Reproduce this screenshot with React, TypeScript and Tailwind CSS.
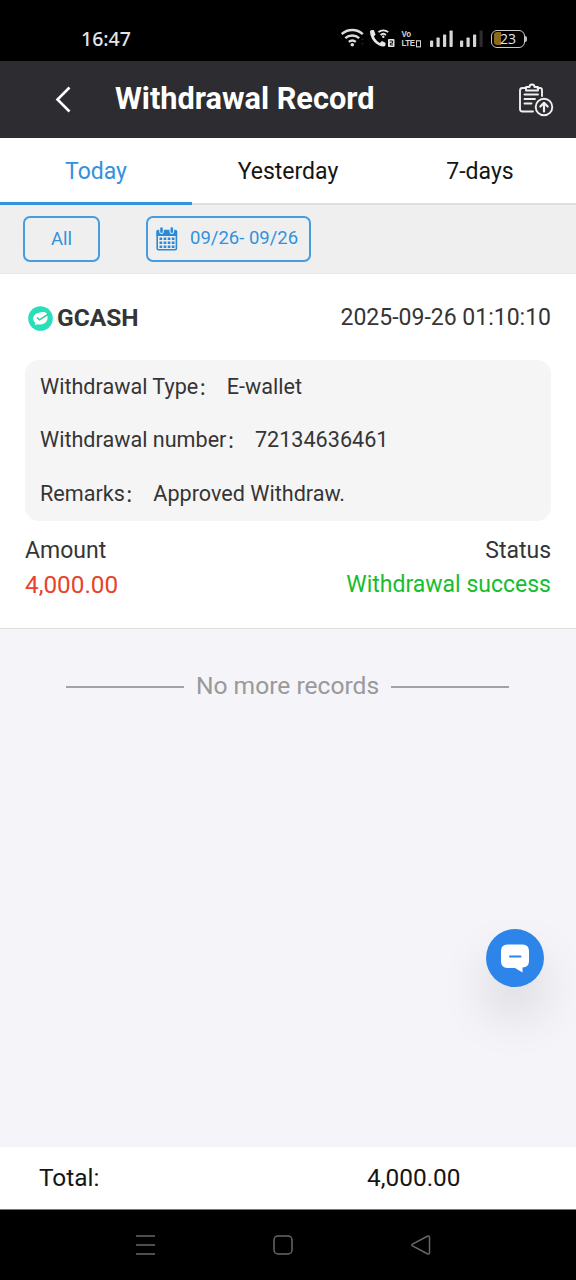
import type { ReactNode } from "react";

const tabs = ["Today", "Yesterday", "7-days"];

const details = [
    { label: "Withdrawal Type", value: "E-wallet" },
    { label: "Withdrawal number", value: "72134636461" },
    { label: "Remarks", value: "Approved Withdraw." },
];

function SignalBars({ weak = false }: { weak?: boolean }) {
    return (
        <svg width="24" height="18" viewBox="0 0 24 18" fill="#d6d6d6">
            <rect x="0" y="10.5" width="3.2" height="6.5" rx="0.8" />
            <rect x="6.5" y="7.5" width="3.2" height="9.5" rx="0.8" />
            <rect x="13" y="4.5" width="3.2" height="12.5" rx="0.8" />
            <rect x="19.5" y="0.5" width="3.2" height="16.5" rx="0.8" fill={weak ? "#2c2c2c" : "#d6d6d6"} />
        </svg>
    );
}

function StatusBar() {
    return (
        <div className="flex h-[61px] items-center bg-black pt-4 pr-[49px] pl-[81px] text-[#e4e4e4]">
            <span className="font-['Noto_Sans',sans-serif] text-[19.5px] leading-none font-medium">16:47</span>
            <div className="ml-auto flex items-center">
                {/* Wifi */}
                <svg className="-mt-0.5" width="24" height="20" viewBox="0 0 24 20" fill="none" stroke="#dcdcdc" strokeWidth="2.4">
                    <path d="M.7 6.1a15.5 15.5 0 0 1 21.1 0" />
                    <path d="M4.3 10.1a10.5 10.5 0 0 1 13.9 0" />
                    <path d="M7.8 13.9a5.5 5.5 0 0 1 7 0" />
                    <circle cx="11.3" cy="16.8" r="1.8" fill="#dcdcdc" stroke="none" />
                    <path d="m20 12 1.5-2 1.5 2zM20 15l1.5 2 1.5-2z" fill="#222" stroke="none" />
                </svg>
                {/* Wifi calling */}
                <svg className="-mt-px ml-[5px]" width="26" height="20" viewBox="0 0 26 20" fill="none">
                    <path
                        d="M0 3.3C0 2.3 1.6 2 3.8 2L5.6 6.6 3.9 8.4c1.5 3 3.2 4.9 6 6.5l2-1.8 3.5 1.7c.6 1.8 0 3.7-1.6 3.7C7 18.5 0 11.5 0 3.3Z"
                        fill="#e6e6e6"
                    />
                    <path d="M8.4 4.2a7.3 7.3 0 0 1 9.8 0M10.6 7a4 4 0 0 1 5.4 0" stroke="#e6e6e6" strokeWidth="1.8" />
                    <circle cx="13.3" cy="8.8" r="1.2" fill="#e6e6e6" />
                    <rect x="18" y="11" width="6.5" height="8" rx="1" fill="#e6e6e6" />
                    <path d="M19.7 13h2.9v2.2h-2.2v1.8h2.6" stroke="#111" strokeWidth="1" />
                </svg>
                <div className="ml-1.5 flex w-[22px] scale-y-120 flex-col font-['Liberation_Sans',sans-serif] text-[8px] leading-[8px] font-bold text-[#d6d6d6]">
                    <span>Vo</span>
                    <span className="flex items-center tracking-[-0.5px]">
                        LTE
                        <i className="ml-[1.5px] h-[6px] w-[5px] shrink-0 border border-[#cfcfcf]" />
                    </span>
                </div>
                <div className="ml-1.5 flex gap-[6.5px]">
                    <SignalBars />
                    <SignalBars weak />
                </div>
                {/* Battery */}
                <div className="ml-[7px] flex items-center">
                    <div className="flex h-[18px] w-[34px] rounded-[6px] border-[1.5px] border-[#c9c9c9] p-[1.5px]">
                        <div className="flex w-full items-center justify-center rounded-[3px] bg-linear-to-r from-[#8d6816] from-25% to-transparent to-25% font-['Open_Sans',sans-serif] text-[14px] leading-none">
                            23
                        </div>
                    </div>
                    <i className="h-[6px] w-[2px] rounded-r bg-[#bdbdbd]" />
                </div>
            </div>
        </div>
    );
}

function Header() {
    return (
        <header className="flex h-[77px] items-center bg-[#2d2c31] pr-[22px] pl-[54px] text-white">
            <svg className="-mt-[2px]" width="18" height="28" viewBox="0 0 18 28" fill="none" stroke="#fff" strokeWidth="2.6">
                <path d="M15.5 2.5 3.5 14.5l12 12" />
            </svg>
            <h1 className="ml-[43px] text-[30.7px] leading-none font-bold">Withdrawal Record</h1>
            <svg
                className="ml-auto"
                width="36"
                height="36"
                viewBox="0 0 36 36"
                fill="none"
                stroke="#efefef"
                strokeWidth="1.9"
                strokeLinecap="round"
                strokeLinejoin="round"
            >
                <path d="M8 6H4.5A2.5 2.5 0 0 0 2 8.5v18.5a2.5 2.5 0 0 0 2.5 2.5H15M19.5 6H22a2 2 0 0 1 2 2v6" />
                <path d="M8 8.500V5h3.500a2.500 2.500 0 0 1 5 0H20v3.500Z" />
                <path d="M6.5 12.5h13.5M6.5 17h10.5M6.5 21.5h7" />
                <circle cx="26" cy="25" r="8.3" />
                <path d="M26 29.5v-8.5M22.3 24.5 26 20.8l3.7 3.7" strokeWidth="2.2" />
            </svg>
        </header>
    );
}

function FilterButton({ className, children }: { className: string; children: ReactNode }) {
    return (
        <button
            className={`-mt-px flex h-[46px] items-center rounded-[7px] border-2 border-[#459cdf] text-[#3292dd] ${className}`}
        >
            {children}
        </button>
    );
}

function CalendarIcon() {
    return (
        <svg width="22" height="24" viewBox="0 0 22 24" fill="none">
            <rect x="1.2" y="3.5" width="19.2" height="19.2" rx="1.2" stroke="#2b8ad8" strokeWidth="1.6" />
            <path d="M.5 3.5h20.6V9H.5z" fill="#2b8ad8" />
            <path d="M5.5 1.5v3.2M15.8 1.5v3.2" stroke="#efefef" strokeWidth="4.6" strokeLinecap="round" />
            <path d="M5.5 1.5v3.2M15.8 1.5v3.2" stroke="#2b8ad8" strokeWidth="2.6" strokeLinecap="round" />
            <path
                d="M3.5 11.8h15M3.5 15.8h15M3.5 19.8h15"
                stroke="#2b8ad8"
                strokeWidth="2.5"
                strokeDasharray="2.7 1.4"
            />
        </svg>
    );
}

function RecordCard() {
    return (
        <article className="h-[355px] border-b border-[#dedee1] bg-white px-[25px] text-[#353535]">
            <div className="flex h-[86px] items-center pt-0.5">
                <svg className="ml-[3px]" width="25" height="25" viewBox="0 0 25 25" fill="none">
                    <circle cx="12.5" cy="12.5" r="12.3" fill="#29dfb9" />
                    <path
                        d="M18.8 7.5C17 6.1 14.5 5.8 12 6.4c-4.5.8-7 3.3-6.8 6.4.1 1.6.9 2.8 2 3.8L6.8 19l3-.8c5.3 1 10-1.5 9.8-7.2Z"
                        fill="#fff"
                    />
                    <path d="m9 11.5 2.5 2.3 8.5-5.5" stroke="#29c9a2" strokeWidth="1.5" />
                </svg>
                <h2 className="ml-1 text-[24.5px] font-bold">GCASH</h2>
                <time className="ml-auto pt-px text-[23px]">2025-09-26 01:10:10</time>
            </div>
            <ul className="flex h-[161px] flex-col rounded-[14px] bg-[#f5f5f5] px-[15px] text-[21.6px]">
                {details.map((item) => (
                    <li key={item.label} className="flex h-[53.6px] items-center">
                        {item.label}
                        <span className="w-[28.5px] pt-[3px] text-[18px]">：</span>
                        {item.value}
                    </li>
                ))}
            </ul>
            <div className="mt-[12px] flex justify-between text-[23px] leading-[36px]">
                <span>Amount</span>
                <span>Status</span>
            </div>
            <div className="flex justify-between leading-[32px]">
                <span className="text-[24.3px] text-[#e8432b]">4,000.00</span>
                <span className="text-[23px] text-[#17bd2d]">Withdrawal success</span>
            </div>
        </article>
    );
}

export default function App() {
    return (
        <div className="relative flex h-[1280px] w-[576px] flex-col overflow-hidden bg-[#f4f4f9] font-[Roboto,'Noto_Sans_CJK_SC',sans-serif]">
            <StatusBar />
            <Header />

            <nav className="flex h-[67px] bg-white text-[23px] text-[#151515]">
                {tabs.map((tab, i) => (
                    <button
                        key={tab}
                        className={
                            i === 0
                                ? "flex-1 border-b-3 border-[#3292dd] pt-1 text-[#3292dd]"
                                : "flex-1 border-b-2 border-[#dedede] pt-[3px]"
                        }
                    >
                        {tab}
                    </button>
                ))}
            </nav>

            <section className="flex h-[69px] items-center border-b border-[#e7e7e7] bg-[#efefef] pl-[23px]">
                <FilterButton className="w-[77px] justify-center pt-[3px] text-[18.5px]">All</FilterButton>
                <FilterButton className="ml-[46px] w-[165px] pl-2 text-[18.5px]">
                    <CalendarIcon />
                    <span className="ml-3">09/26- 09/26</span>
                </FilterButton>
            </section>

            <RecordCard />

            <div className="flex flex-1 items-start pt-[39px] pr-[67px] pl-[66px] text-[24.6px] text-[#999]">
                <div className="flex w-full items-center gap-3 leading-[36px]">
                    <i className="mt-0.5 h-[2px] flex-1 bg-[#a3a3a5]" />
                    No more records
                    <i className="mt-0.5 h-[2px] flex-1 bg-[#a3a3a5]" />
                </div>
            </div>

            <footer className="flex h-[62px] items-center bg-white text-[24.4px] text-[#151515]">
                <span className="w-[367px] pl-[39px]">Total:</span>
                <span>4,000.00</span>
            </footer>

            <div className="flex h-[71px] items-center border-t border-[#777] bg-black pl-[136px]">
                <svg width="20" height="22" viewBox="0 0 20 22" stroke="#686868" strokeWidth="1.7">
                    <path d="M0 2h19M0 11h19M0 20h19" />
                </svg>
                <svg className="ml-[117px]" width="20" height="20" viewBox="0 0 20 20" fill="none" stroke="#686868" strokeWidth="1.5">
                    <rect x="1" y="1" width="18" height="18" rx="4" />
                </svg>
                <svg className="ml-[118px]" width="20" height="20" viewBox="0 0 20 20" fill="none" stroke="#686868" strokeWidth="1.5">
                    <path d="M1.5 9.2 16.3 1.3Q18.5.5 18.5 2.5v15q0 2-2.2 1.2L1.5 10.8Q.2 10 1.5 9.2Z" />
                </svg>
            </div>

            {/* Support chat */}
            <button className="absolute top-[929px] left-[486px] flex size-[58px] items-center justify-center rounded-full bg-[#2d85ea] shadow-[0_28px_50px_rgba(0,0,0,0.13)]">
                <svg width="30" height="30" viewBox="0 0 30 30">
                    <path
                        d="M7.5 1.5h15q6.5 0 6.5 6.5v10q0 6-6.5 6.5V29.5L15 25H7.5Q1 25 1 18.5V8q0-6.5 6.5-6.5Z"
                        fill="#fff"
                    />
                    <path d="M10 13.5h10.5" stroke="#2d85ea" strokeWidth="2" strokeLinecap="round" />
                </svg>
            </button>
        </div>
    );
}
